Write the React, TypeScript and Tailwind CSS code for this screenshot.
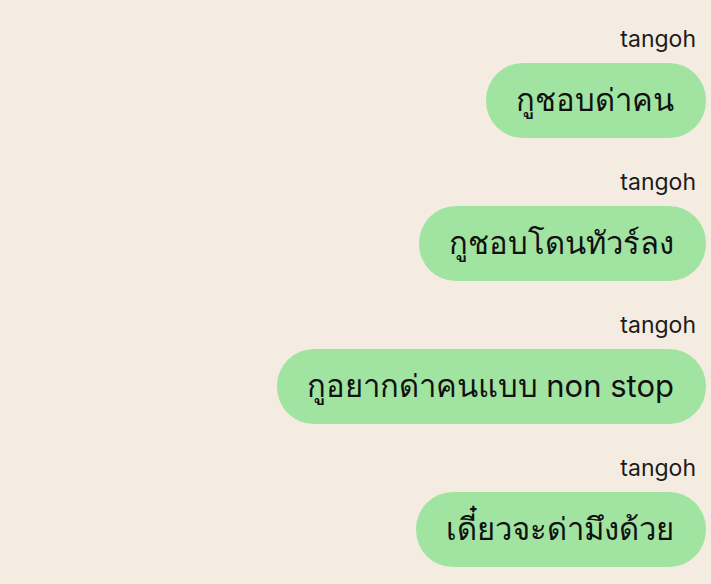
const messages = [
  { name: 'tangoh', text: 'กูชอบด่าคน' },
  { name: 'tangoh', text: 'กูชอบโดนทัวร์ลง' },
  { name: 'tangoh', text: 'กูอยากด่าคนแบบ non stop' },
  { name: 'tangoh', text: 'เดี๋ยวจะด่ามึงด้วย' },
]

function Bubble({ name, text }: { name: string; text: string }) {
  return (
    <div className="flex flex-col items-end">
      <div className="pr-[10px] text-[23px] leading-[24px] text-[#1c1c1c]">{name}</div>
      <div className="mt-[12px] flex h-[75px] items-center rounded-[37px] bg-[#a1e4a1] pl-[30px] pr-[32px] text-[31px] text-[#111]">
        {text}
      </div>
    </div>
  )
}

export default function App() {
  return (
    <div
      className="h-[584px] w-[711px] overflow-hidden bg-[#f5ece1] pr-[5px] pt-[27px]"
      style={{ fontFamily: 'Inter, "Noto Sans", sans-serif' }}
    >
      <div className="flex flex-col gap-[32px]">
        {messages.map((m, i) => (
          <Bubble key={i} name={m.name} text={m.text} />
        ))}
      </div>
    </div>
  )
}
